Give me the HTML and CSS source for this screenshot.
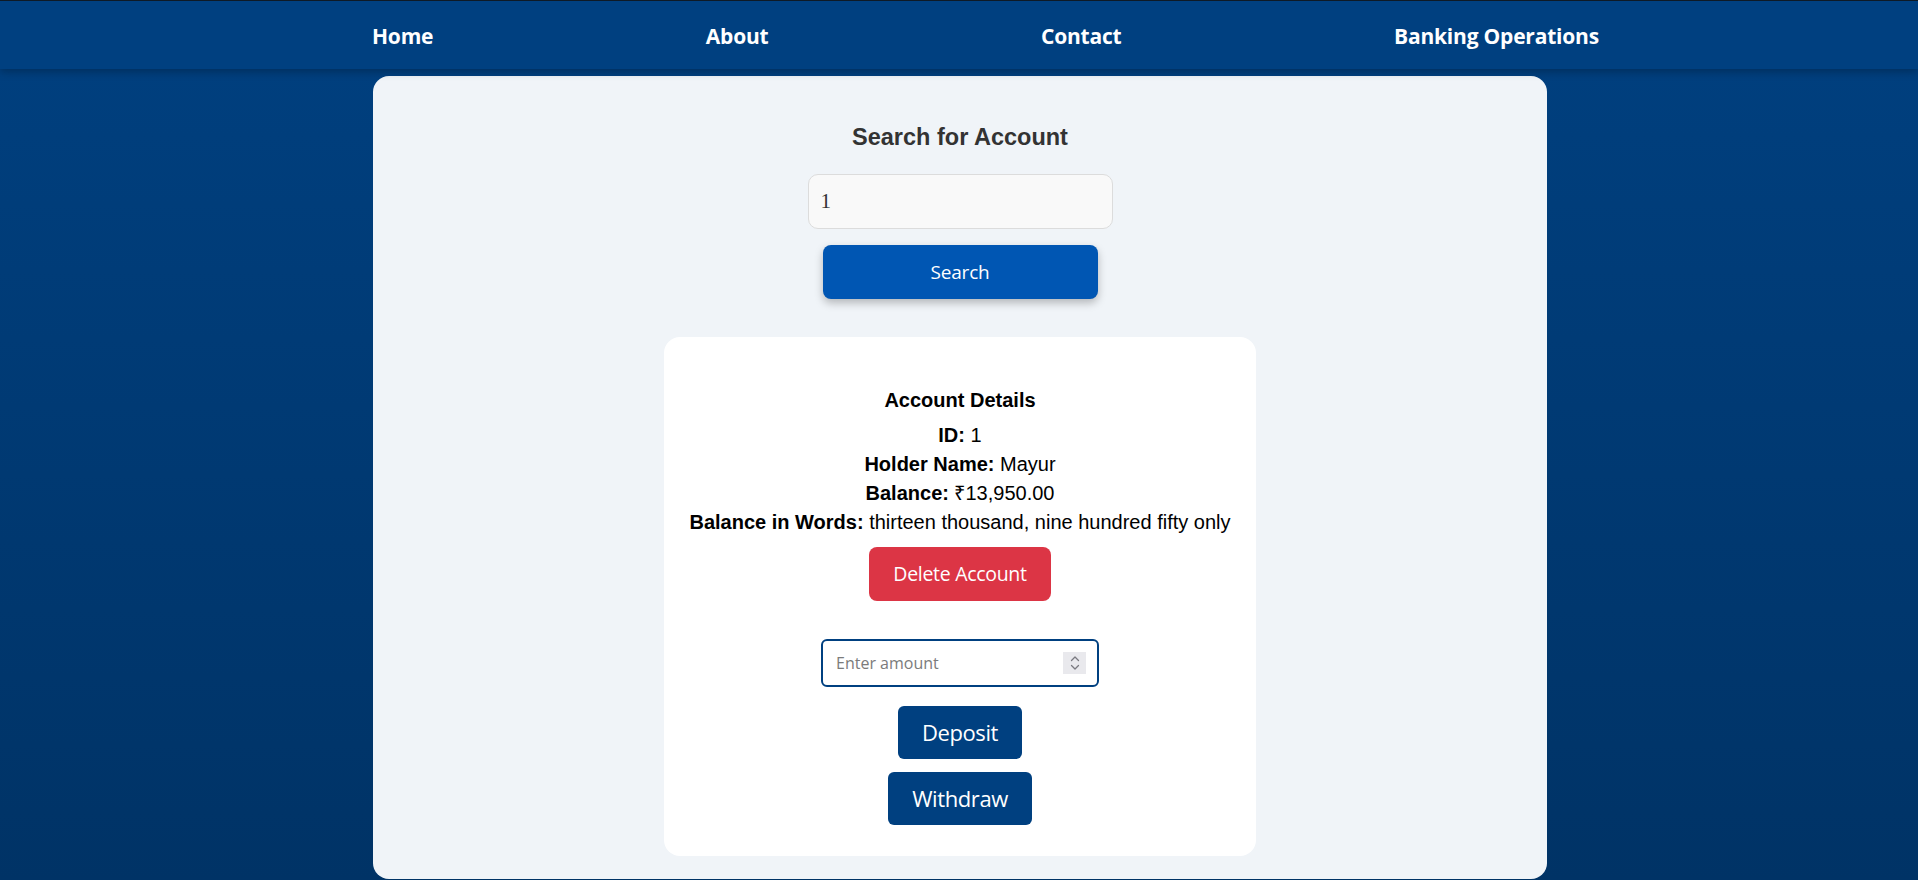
FILE: index.html
```html
<!DOCTYPE html>
<html lang="en">
<head>
<meta charset="utf-8">
<title>Banking Operations</title>
<link rel="stylesheet" href="styles.css">
</head>
<body>
<header class="topbar">
  <nav class="nav">
    <a class="nav-link" href="#">Home</a>
    <a class="nav-link" href="#">About</a>
    <a class="nav-link" href="#">Contact</a>
    <a class="nav-link" href="#">Banking Operations</a>
  </nav>
</header>
<main class="panel">
  <h2 class="panel-title">Search for Account</h2>
  <input class="search-input" type="text" value="1">
  <button class="btn-search" type="button">Search</button>
  <section class="details">
    <h3 class="details-title">Account Details</h3>
    <p class="detail-line"><strong>ID:</strong> 1</p>
    <p class="detail-line"><strong>Holder Name:</strong> Mayur</p>
    <p class="detail-line"><strong>Balance:</strong> ₹13,950.00</p>
    <p class="detail-line"><strong>Balance in Words:</strong> thirteen thousand, nine hundred fifty only</p>
    <button class="btn-delete" type="button">Delete Account</button>
    <div class="amount-field">
      <input class="amount-input" type="text" placeholder="Enter amount">
      <span class="spin">
        <svg width="10" height="16" viewBox="0 0 10 16" fill="none" stroke="#7a7a80" stroke-width="1.3" stroke-linecap="round" stroke-linejoin="round">
          <path d="M1.5 5.5 L5 2 L8.5 5.5"/>
          <path d="M1.5 10.5 L5 14 L8.5 10.5"/>
        </svg>
      </span>
    </div>
    <button class="btn-op btn-deposit" type="button">Deposit</button>
    <button class="btn-op btn-withdraw" type="button">Withdraw</button>
  </section>
</main>
</body>
</html>
```
FILE: styles.css
```css
html, body {
  margin: 0;
  padding: 0;
}
body {
  min-height: 880px;
  background: linear-gradient(to bottom, #004080 0%, #003366 100%);
  font-family: "Liberation Sans", Arial, sans-serif;
  overflow: hidden;
}
.topbar {
  height: 68px;
  border-top: 1px solid #0e1a26;
  background: #004080;
  box-shadow: 0 3px 8px rgba(0, 0, 0, 0.25);
  position: relative;
  z-index: 1;
}
.nav {
  height: 100%;
  box-sizing: border-box;
  display: flex;
  align-items: center;
  justify-content: space-between;
  padding: 3px 319px 0 372px;
}
.nav-link {
  color: #ffffff;
  text-decoration: none;
  font-family: "Open Sans", "Noto Sans", sans-serif;
  font-weight: 700;
  font-size: 21px;
  letter-spacing: -0.2px;
  line-height: 1;
}
.panel {
  width: 1174px;
  box-sizing: border-box;
  margin: 7px auto 0;
  padding: 20px 20px 23px;
  background: #f0f4f8;
  border-radius: 16px;
  display: flex;
  flex-direction: column;
  align-items: center;
  position: relative;
  left: 1px;
}
.panel-title {
  margin: 28px 0 22px;
  font-family: "Liberation Sans", Arial, sans-serif;
  font-weight: 700;
  font-size: 23.5px;
  line-height: 27.6px;
  color: #333333;
}
.search-input {
  width: 305px;
  height: 55px;
  box-sizing: border-box;
  margin: 0 0 16px;
  padding: 0 12px;
  border: 1px solid #dcdcdc;
  border-radius: 10px;
  background: #f9f9f9;
  font-family: "Liberation Serif", "Times New Roman", serif;
  font-size: 21px;
  color: #333333;
  outline: none;
}
.btn-search {
  width: 275px;
  height: 54px;
  margin: 0 0 38px;
  border: none;
  border-radius: 8px;
  background: #0056b3;
  color: #ffffff;
  font-family: "Open Sans", "Noto Sans", sans-serif;
  font-size: 19px;
  letter-spacing: -0.2px;
  box-shadow: 0 4px 8px rgba(0, 0, 0, 0.25);
  cursor: pointer;
}
.details {
  width: 592px;
  box-sizing: border-box;
  padding: 30px 20px 31px;
  background: #ffffff;
  border-radius: 16px;
  display: flex;
  flex-direction: column;
  align-items: center;
  color: #000000;
}
.details-title {
  margin: 22px 0 9px;
  font-size: 20px;
  line-height: 23px;
  font-weight: 700;
}
.detail-line {
  margin: 0;
  font-size: 20px;
  line-height: 29.3px;
  text-align: center;
}
.btn-delete {
  height: 54px;
  margin: 9px 0 0;
  padding: 0 24px;
  border: none;
  border-radius: 8px;
  background: #dc3545;
  color: #ffffff;
  font-family: "Open Sans", "Noto Sans", sans-serif;
  font-size: 19.5px;
  letter-spacing: -0.3px;
  cursor: pointer;
}
.amount-field {
  position: relative;
  margin-top: 38px;
  width: 278px;
  height: 48px;
}
.amount-input {
  width: 100%;
  height: 100%;
  box-sizing: border-box;
  border: 2px solid #004080;
  border-radius: 6px;
  padding: 0 40px 0 13px;
  background: #ffffff;
  font-family: "Open Sans", "Noto Sans", sans-serif;
  font-size: 16px;
  color: #333333;
  outline: none;
}
.amount-input::placeholder {
  color: #7b7b7b;
}
.spin {
  position: absolute;
  right: 13px;
  top: 13px;
  width: 23px;
  height: 22px;
  background: #e9e9ed;
  display: flex;
  align-items: center;
  justify-content: center;
}
.btn-op {
  height: 53px;
  padding: 0 24px;
  border: none;
  border-radius: 6px;
  background: #004080;
  color: #ffffff;
  font-family: "Open Sans", "Noto Sans", sans-serif;
  font-size: 22px;
  letter-spacing: -0.4px;
  cursor: pointer;
}
.btn-deposit {
  margin-top: 19px;
}
.btn-withdraw {
  margin-top: 13px;
}
```
